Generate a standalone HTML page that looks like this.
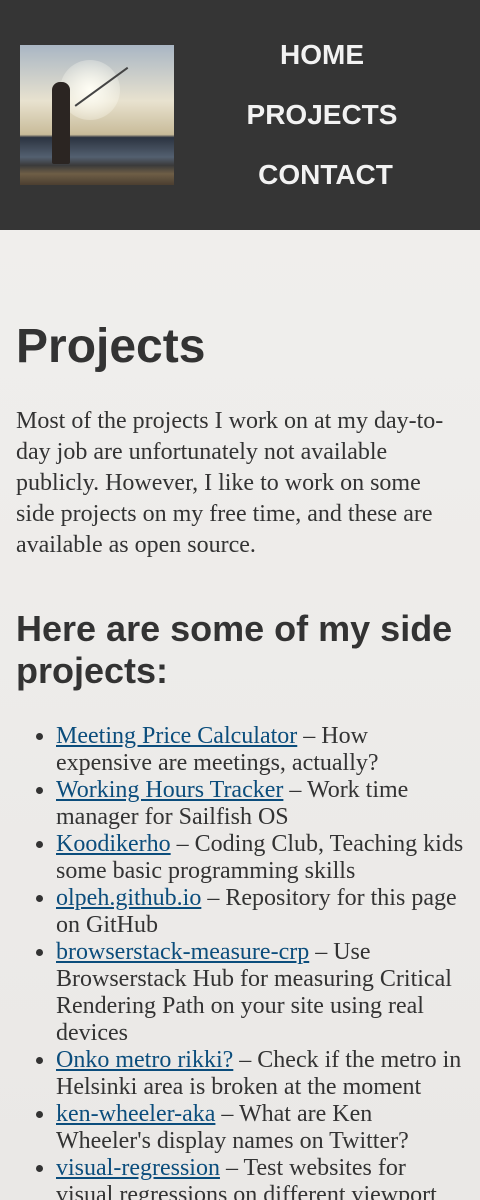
<!DOCTYPE html>
<html style="height:1200px;overflow:hidden;background:#eae8e6"><head><meta charset="utf-8"><style>
body{margin:0;width:480px;height:1200px;overflow:hidden;background:linear-gradient(#f1f0ee,#eae8e6);color:#333;font-family:"Liberation Serif",serif;position:relative}
header{background:#353535;height:230px;position:relative}
.img{position:absolute;left:20px;top:45px;width:154px;height:140px;background:linear-gradient(#a9b6c4 0%,#e8e2cf 40%,#c8bb99 64%,#2b3340 66%,#536070 80%,#3a3a3a 86%,#6e5e46 92%,#4b3e30 100%);overflow:hidden}
.sun{position:absolute;left:40px;top:15px;width:60px;height:60px;border-radius:50%;background:radial-gradient(#fffef5,rgba(255,250,230,0))}
.man{position:absolute;left:32px;top:37px;width:18px;height:82px;background:#2b2522;border-radius:8px 8px 2px 2px}
.rod{position:absolute;left:55px;top:60px;width:65px;height:1.5px;background:#444;transform:rotate(-36deg);transform-origin:left}
nav{position:absolute;left:174px;right:10px;top:0;font-family:"Liberation Sans",sans-serif;font-weight:bold;font-size:28px;color:#f2f2f2;text-align:center}
nav div{position:absolute;left:0;right:0}
h1{position:absolute;left:16px;top:319px;margin:0;font:bold 48px/56px "Liberation Sans",sans-serif}
p{position:absolute;left:16px;top:406px;margin:0;width:440px;font-size:24px;line-height:31px}
h2{position:absolute;left:16px;top:608px;margin:0;width:460px;font:bold 36px/42px "Liberation Sans",sans-serif}
ul{position:absolute;left:16px;top:723px;margin:0;padding-left:40px;width:410px;font-size:24px;line-height:27px}
a{color:#0b4d7c}
</style></head><body>
<header><div class="img"><div class="sun"></div><div class="rod"></div><div class="man"></div></div>
<nav><div style="top:39px">HOME</div><div style="top:99px">PROJECTS</div><div style="top:159px;left:7px">CONTACT</div></nav></header>
<h1>Projects</h1>
<p>Most of the projects I work on at my day-to-day job are unfortunately not available publicly. However, I like to work on some side projects on my free time, and these are available as open source.</p>
<h2>Here are some of my side projects:</h2>
<ul>
<li><a href="#">Meeting Price Calculator</a> – How expensive are meetings, actually?</li>
<li><a href="#">Working Hours Tracker</a> – Work time manager for Sailfish OS</li>
<li><a href="#">Koodikerho</a> – Coding Club, Teaching kids some basic programming skills</li>
<li><a href="#">olpeh.github.io</a> – Repository for this page on GitHub</li>
<li><a href="#">browserstack-measure-crp</a> – Use Browserstack Hub for measuring Critical Rendering Path on your site using real devices</li>
<li><a href="#">Onko metro rikki?</a> – Check if the metro in Helsinki area is broken at the moment</li>
<li><a href="#">ken-wheeler-aka</a> – What are Ken Wheeler's display names on Twitter?</li>
<li><a href="#">visual-regression</a> – Test websites for visual regressions on different viewport sizes</li>
</ul>
</body></html>
